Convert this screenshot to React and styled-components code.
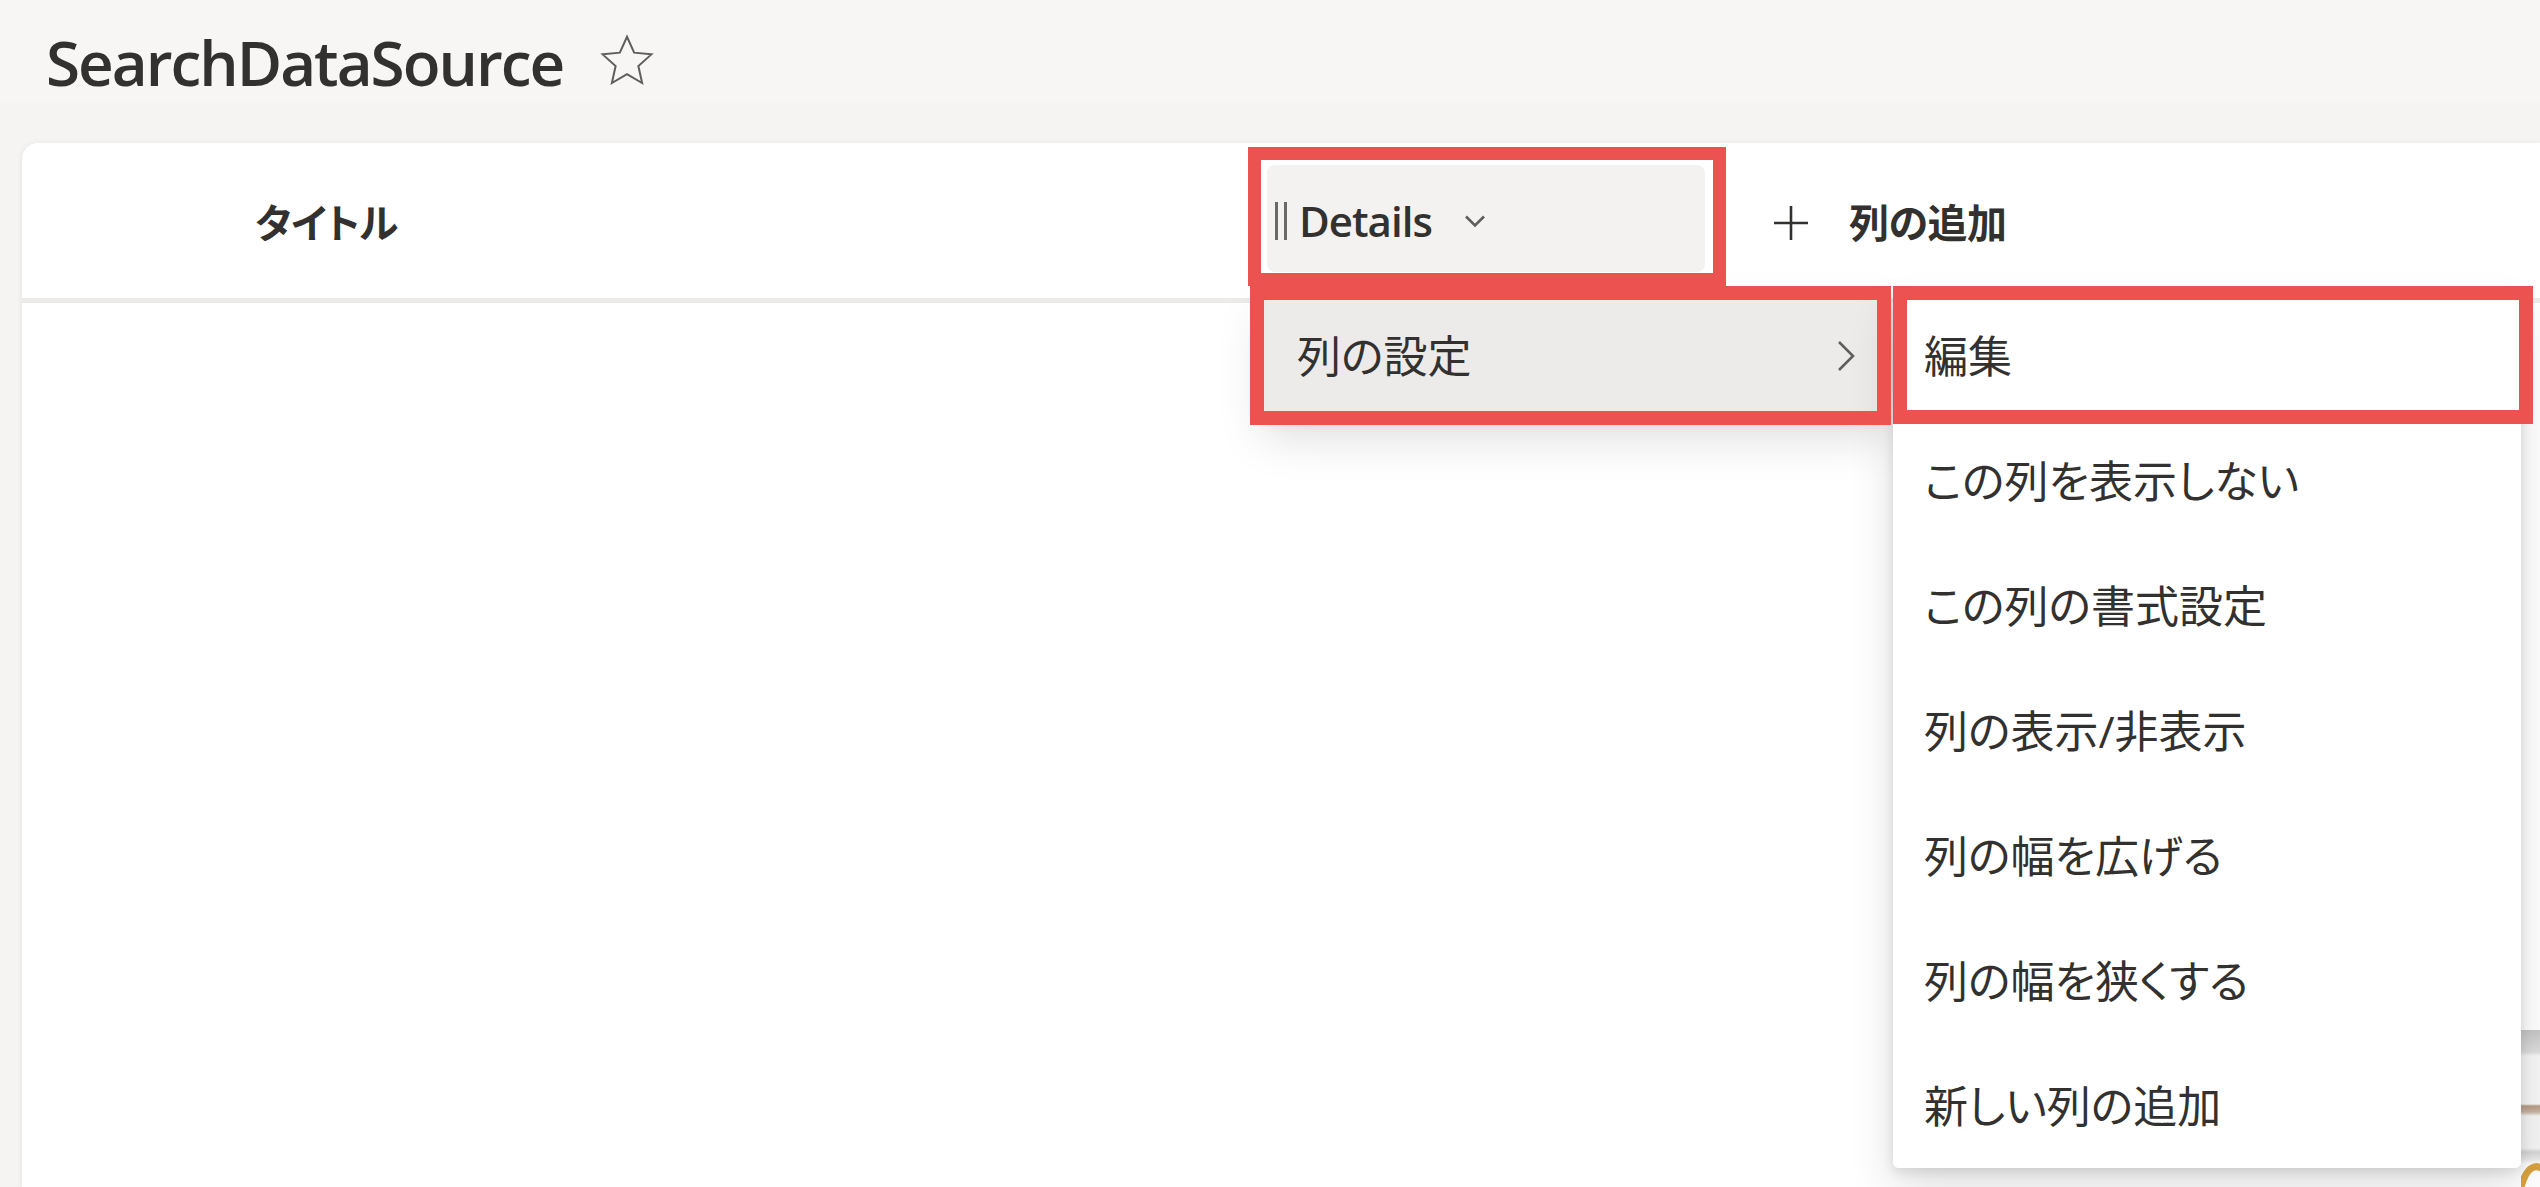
import React from 'react';
import styled, { createGlobalStyle } from 'styled-components';

const GlobalStyle = createGlobalStyle`
  html, body {
    margin: 0;
    padding: 0;
    background: #f5f4f2;
    overflow: hidden;
  }
  body {
    font-family: "Open Sans", "Noto Sans CJK JP", sans-serif;
    color: #323130;
  }
`;

const Page = styled.div`
  position: relative;
  width: 2540px;
  height: 1187px;
  display: flex;
  flex-direction: column;
`;

// Title strip above the list
const TitleBar = styled.div`
  box-sizing: border-box;
  height: 103px;
  padding: 31px 0 0 46px;
  display: flex;
  align-items: flex-start;
  background: #f7f6f5;
`;

const PageTitle = styled.h1`
  margin: 0;
  font-size: 62px;
  line-height: 1;
  font-weight: 600;
  letter-spacing: -2px;
  color: #323130;
`;

const StarButton = styled.span`
  display: inline-flex;
  margin: 0 0 0 34px;
  color: #605e5c;
`;

// List card
const Card = styled.div`
  flex: 1;
  margin: 40px 0 0 22px;
  background: #fff;
  border-radius: 16px 0 0 0;
  box-shadow: 0 1px 6px rgba(0, 0, 0, 0.08);
  display: flex;
  flex-direction: column;
`;

const HeaderRow = styled.div`
  height: 155px;
  border-bottom: 5px solid #edebe9;
  display: flex;
  align-items: center;
`;

const CheckCol = styled.div`
  width: 200px;
  flex-shrink: 0;
`;

const HeaderText = styled.span`
  font-size: ${(p) => (p.$latin ? 42 : 40)}px;
  line-height: 1;
  font-weight: ${(p) => (p.$latin ? 600 : 700)};
  letter-spacing: ${(p) => (p.$latin ? '-1px' : '-0.5px')};
  font-feature-settings: "palt";
  color: #323130;
`;

const TitleCell = styled.div`
  width: 1045px;
  flex-shrink: 0;
  box-sizing: border-box;
  padding: 4px 0 0 33px;
`;

const ColumnHeader = styled.div`
  width: 438px;
  height: 107px;
  flex-shrink: 0;
  box-sizing: border-box;
  margin-top: -4px;
  padding: 4px 0 0 8px;
  border-radius: 8px;
  background: #f3f2f1;
  display: flex;
  align-items: center;
`;

const DragHandle = styled.span`
  width: 12px;
  height: 38px;
  margin-right: 12px;
  border-left: 3px solid #6b6967;
  border-right: 3px solid #6b6967;
  box-sizing: border-box;
`;

const ChevronDown = styled.span`
  display: inline-flex;
  margin-left: 32px;
  color: #605e5c;
`;

const AddColumn = styled.div`
  margin-left: 68px;
  padding-top: 4px;
  display: flex;
  align-items: center;
  gap: 40px;
`;

const Body = styled.div`
  flex: 1;
  display: flex;
  justify-content: flex-end;
  padding-top: 727px;
`;

const Thumb = styled.div`
  width: 19px;
  background: linear-gradient(
    to bottom,
    #c6c6c6 0px,
    #dedede 22px,
    #f7f7f7 26px,
    #f7f7f7 74px,
    #b89c86 76px,
    #c9b3a2 82px,
    #f5f5f5 86px,
    #f5f5f5 118px,
    #d6d6d6 122px,
    #ececec 130px,
    #ffffff 134px
  );
  position: relative;
  overflow: hidden;
`;

// Context menus
const Menu = styled.div`
  position: absolute;
  left: ${(p) => p.$left}px;
  top: ${(p) => p.$top}px;
  width: ${(p) => p.$width}px;
  background: #fff;
  border-radius: 6px;
  overflow: hidden;
  box-shadow: 0 20px 46px rgba(0, 0, 0, 0.13), 0 4px 12px rgba(0, 0, 0, 0.11);
  z-index: 2;
`;

const MenuItem = styled.div`
  height: 125px;
  box-sizing: border-box;
  padding: 0 37px 0 ${(p) => p.$indent}px;
  display: flex;
  align-items: center;
  justify-content: space-between;
  background: ${(p) => (p.$active ? '#edebe9' : '#fff')};
  font-size: 44px;
  line-height: 1;
  font-weight: 400;
  font-feature-settings: "palt";
  color: #323130;
`;

const ChevronRight = styled.span`
  display: inline-flex;
  color: #605e5c;
`;

// Red annotation frames drawn over the screenshot
const Callout = styled.div`
  position: absolute;
  left: ${(p) => p.$x}px;
  top: ${(p) => p.$y}px;
  width: ${(p) => p.$w}px;
  height: ${(p) => p.$h}px;
  box-sizing: border-box;
  border: ${(p) => p.$b}px solid #eb5250;
  z-index: 3;
`;

const subItems = [
  '編集',
  'この列を表示しない',
  'この列の書式設定',
  '列の表示/非表示',
  '列の幅を広げる',
  '列の幅を狭くする',
  '新しい列の追加',
];

export default function App() {
  return (
    <Page>
      <GlobalStyle />
      <TitleBar>
        <PageTitle>SearchDataSource</PageTitle>
        <StarButton>
          <svg width="60" height="60" viewBox="0 0 24 24" fill="none" stroke="currentColor" strokeWidth="0.8" strokeLinejoin="miter">
            <path d="M12 2.3l2.85 6.35 6.9.7-5.2 4.65 1.5 6.8L12 17.3l-6.05 3.5 1.5-6.8-5.2-4.65 6.9-.7z" />
          </svg>
        </StarButton>
      </TitleBar>

      <Card>
        <HeaderRow>
          <CheckCol />
          <TitleCell>
            <HeaderText>タイトル</HeaderText>
          </TitleCell>
          <ColumnHeader>
            <DragHandle />
            <HeaderText $latin>Details</HeaderText>
            <ChevronDown>
              <svg width="22" height="14" viewBox="0 0 22 14" fill="none" stroke="currentColor" strokeWidth="2.6">
                <path d="M2 2.5l9 9 9-9" />
              </svg>
            </ChevronDown>
          </ColumnHeader>
          <AddColumn>
            <svg width="36" height="36" viewBox="0 0 36 36" fill="none" stroke="#323130" strokeWidth="2.6">
              <path d="M18 1v34M1 18h34" />
            </svg>
            <HeaderText>列の追加</HeaderText>
          </AddColumn>
        </HeaderRow>
        <Body>
          <Thumb>
            <svg width="19" height="40" viewBox="0 0 19 40" style={{ position: 'absolute', left: 0, bottom: -10 }}>
              <path d="M0 30 C6 8, 16 6, 24 14" fill="none" stroke="#d9a23f" strokeWidth="7" />
            </svg>
          </Thumb>
        </Body>
      </Card>

      <Menu $left={1262} $top={293} $width={630}>
        <MenuItem $indent={35} $active>
          <span>列の設定</span>
          <ChevronRight>
            <svg width="18" height="32" viewBox="0 0 18 32" fill="none" stroke="currentColor" strokeWidth="2.6">
              <path d="M2 2l14 14L2 30" />
            </svg>
          </ChevronRight>
        </MenuItem>
      </Menu>

      <Menu $left={1893} $top={293} $width={628}>
        {subItems.map((label) => (
          <MenuItem key={label} $indent={31}>
            <span>{label}</span>
          </MenuItem>
        ))}
      </Menu>

      <Callout $x={1248} $y={147} $w={478} $h={139} $b={13} />
      <Callout $x={1250} $y={286} $w={641} $h={139} $b={14} />
      <Callout $x={1893} $y={286} $w={640} $h={138} $b={14} />
    </Page>
  );
}
